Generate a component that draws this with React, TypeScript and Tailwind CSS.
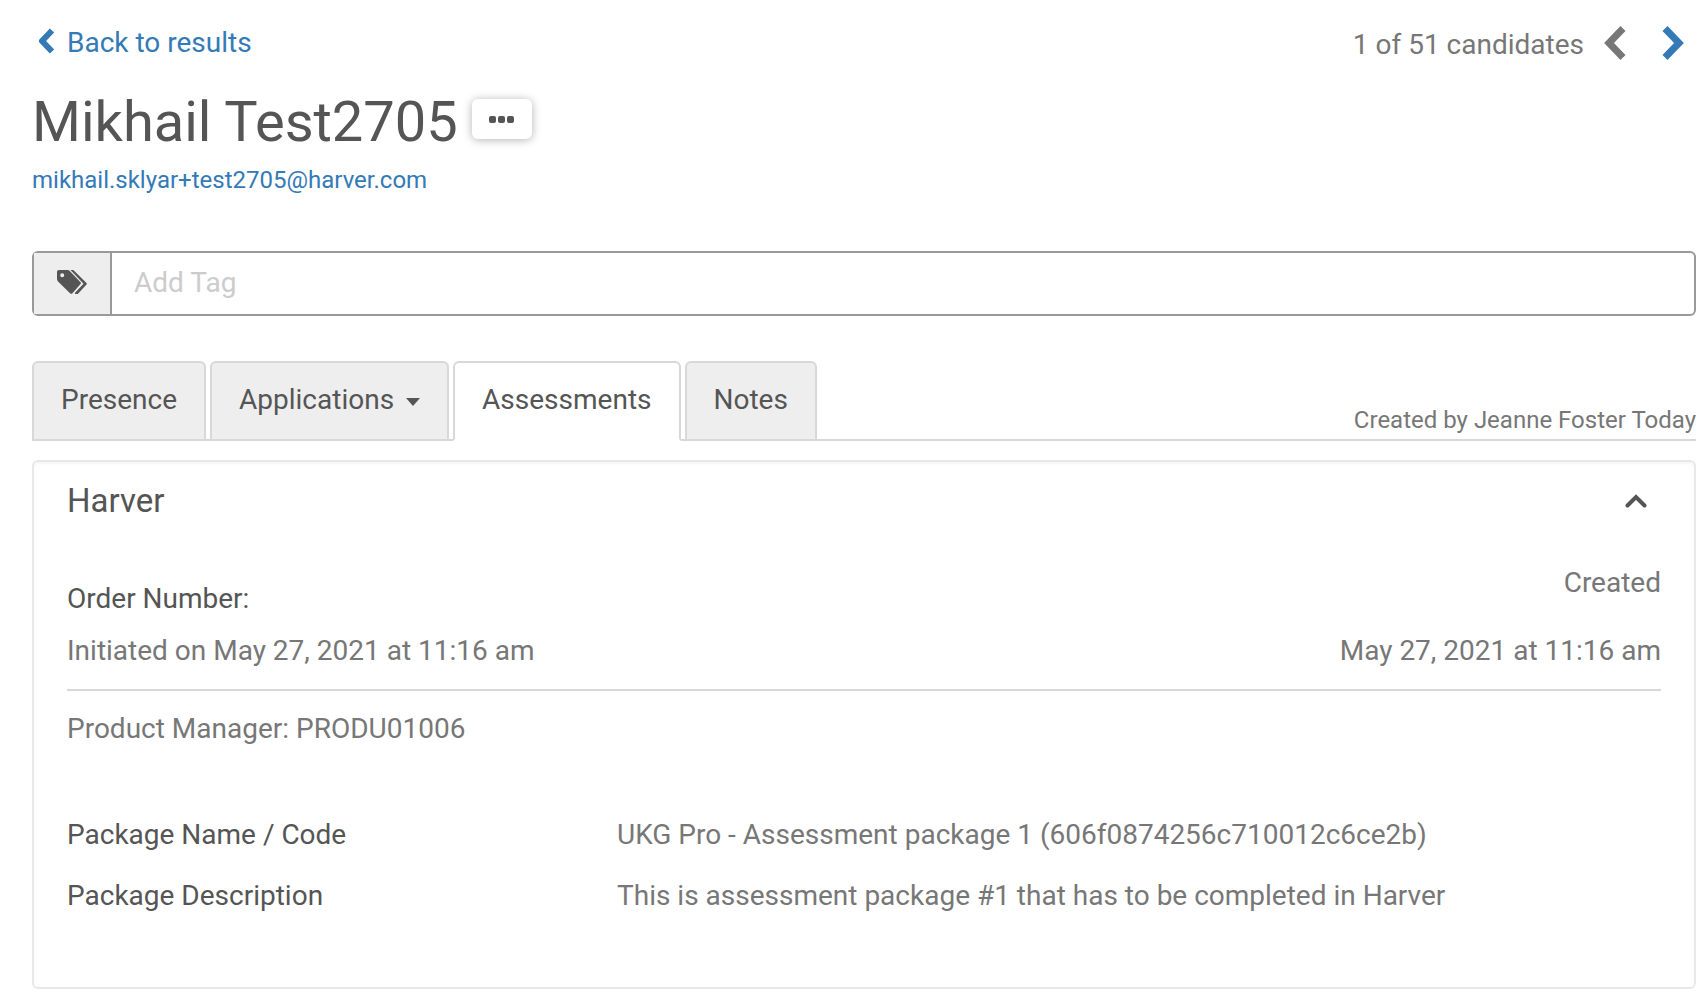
import { useState } from "react";

const tabs = ["Presence", "Applications", "Assessments", "Notes"];

const details = [
  { label: "Package Name / Code", value: "UKG Pro - Assessment package 1 (606f0874256c710012c6ce2b)" },
  { label: "Package Description", value: "This is assessment package #1 that has to be completed in Harver" },
];

const TagsIcon = () => (
  <svg viewBox="0 0 30 24" className="-mt-1 h-6 w-[30px]" fill="currentColor" aria-hidden="true">
    <path
      fillRule="evenodd"
      d="M2 0h8.500c.8 0 1.500.3 2 .8L23.500 12.200c.6.6.6 1.300 0 1.900l-8.300 9.300c-.5.600-1.300.6-1.900 0L1 11.500C.4 10.800 0 10 0 9V2C0 .8.8 0 2 0Zm3.200 3.200a2 2 0 1 0 0 4 2 2 0 0 0 0-4Z"
    />
    <path d="M13.500 0h2.800l13.200 13c.5.500.5 1 0 1.500L20.800 24h-2.600l-.4-.9 8.700-9.300Z" />
  </svg>
);

const Header = () => (
  <header>
    <div className="flex items-start justify-between pr-3">
      <a href="#results" className="flex items-center gap-3 pl-1.5 text-[28px] leading-9 text-[#337ab7]">
        <svg viewBox="0 0 17 26" className="-mt-1 h-[26px] w-[17px]" fill="none" stroke="currentColor" strokeWidth="6" strokeLinejoin="round" aria-hidden="true">
          <path d="M14 2.500 4 13l10 10.500" />
        </svg>
        Back to results
      </a>
      <nav aria-label="Candidates" className="flex items-center text-[28px] leading-9 text-[#777]">
        <span className="mt-0.5">1 of 51 candidates</span>
        <button type="button" aria-label="Previous candidate" className="-mt-0.5 ml-5">
          <svg viewBox="0 0 22 34" className="h-[34px] w-[22px]" fill="none" stroke="currentColor" strokeWidth="7">
            <path d="M19 2.500 5 17l14 14.500" />
          </svg>
        </button>
        <button type="button" aria-label="Next candidate" className="-mt-0.5 ml-9 text-[#337ab7]">
          <svg viewBox="0 0 22 34" className="h-[34px] w-[22px]" fill="none" stroke="currentColor" strokeWidth="7">
            <path d="M3 2.500 17 17 3 31.500" />
          </svg>
        </button>
      </nav>
    </div>
    <div className="mt-[27px] flex items-start gap-3.5">
      <h1 className="text-[56px] leading-[64px] text-[#555]">Mikhail Test2705</h1>
      <button
        type="button"
        aria-label="More actions"
        className="mt-[9px] flex h-10 w-[60px] items-center justify-center gap-0.5 rounded-md bg-white shadow-[0_1px_10px_rgba(0,0,0,0.3)]"
      >
        <span className="size-[7px] rounded-xs bg-[#555]" />
        <span className="size-[7px] rounded-xs bg-[#555]" />
        <span className="size-[7px] rounded-xs bg-[#555]" />
      </button>
    </div>
    <a href="mailto:mikhail.sklyar+test2705@harver.com" className="mt-2.5 block w-fit text-2xl leading-8 text-[#337ab7]">
      mikhail.sklyar+test2705@harver.com
    </a>
  </header>
);

const TagInput = () => (
  <div className="mt-[55px] flex h-[65px] rounded-md border-2 border-[#999]">
    <label htmlFor="tag" aria-label="Add Tag" className="flex w-[78px] items-center justify-center border-r-2 border-[#999] bg-[#eee] text-[#555]">
      <TagsIcon />
    </label>
    <input
      id="tag"
      type="text"
      placeholder="Add Tag"
      className="min-w-0 flex-1 px-[22px] pb-0.5 text-[28px] leading-9 text-[#555] outline-none placeholder:text-[#ccc]"
    />
  </div>
);

const Tabs = () => {
  const [active, setActive] = useState("Assessments");

  return (
    <div className="mt-[45px] flex items-end justify-between shadow-[inset_0_-2px_0_#d8d8d8]">
      <div role="tablist" className="flex gap-1">
        {tabs.map((tab) => (
          <button
            key={tab}
            type="button"
            role="tab"
            aria-selected={tab === active}
            onClick={() => setActive(tab)}
            className={`flex h-20 items-start rounded-t-md border-2 border-[#d8d8d8] px-[27px] pt-[19px] text-[28px] leading-9 text-[#555] ${
              tab === active ? "border-b-white bg-white" : "bg-[#eee]"
            }`}
          >
            {tab}
            {tab === "Applications" && (
              <svg viewBox="0 0 14 8" className="mt-4 ml-3 h-2 w-3.5" fill="currentColor" aria-hidden="true">
                <path d="M0 0h14L7 8Z" />
              </svg>
            )}
          </button>
        ))}
      </div>
      <p className="pb-[5px] text-2xl leading-8 text-[#777]">Created by Jeanne Foster Today</p>
    </div>
  );
};

const AssessmentPanel = () => (
  <section className="mt-[19px] rounded-md border-2 border-[#e8e8e8] px-[33px] pt-[19px] pb-[73px] text-[28px] leading-9 text-[#777] shadow-[inset_0_2px_2px_rgba(0,0,0,0.04)]">
    <div className="flex items-center justify-between pr-3.5">
      <h2 className="text-[33px] leading-10 text-[#555]">Harver</h2>
      <button type="button" aria-label="Collapse" className="text-[#555]">
        <svg viewBox="0 0 22 14" className="h-3.5 w-[22px]" fill="none" stroke="currentColor" strokeWidth="4" strokeLinecap="round">
          <path d="M2.500 11.500 11 3l8.500 8.500" />
        </svg>
      </button>
    </div>
    <div className="mt-11 flex justify-between border-b-2 border-[#d8d8d8] pb-5">
      <div className="flex flex-col gap-4 pt-4">
        <h3 className="text-[#555]">Order Number:</h3>
        <p>Initiated on May 27, 2021 at 11:16 am</p>
      </div>
      <div className="flex flex-col justify-between text-right">
        <p>Created</p>
        <p>May 27, 2021 at 11:16 am</p>
      </div>
    </div>
    <p className="mt-5">Product Manager: PRODU01006</p>
    <dl className="mt-[70px] flex flex-col gap-[25px]">
      {details.map(({ label, value }) => (
        <div key={label} className="flex">
          <dt className="w-[550px] shrink-0 text-[#555]">{label}</dt>
          <dd>{value}</dd>
        </div>
      ))}
    </dl>
  </section>
);

const App = () => (
  <main className="bg-white pt-[25px] pr-2.5 pl-8 font-[Roboto,sans-serif]">
    <Header />
    <TagInput />
    <Tabs />
    <AssessmentPanel />
  </main>
);

export default App;
